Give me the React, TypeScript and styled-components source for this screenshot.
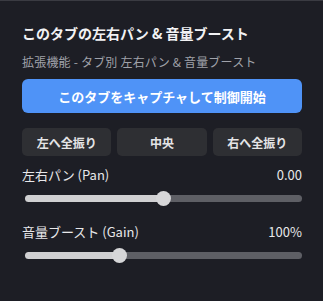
import { useState } from "react";
import styled, { createGlobalStyle } from "styled-components";

const GlobalStyle = createGlobalStyle`
  html, body {
    margin: 0;
    padding: 0;
    background: #1d1e25;
  }
  body {
    font-family: "Noto Sans CJK JP", "Noto Sans", sans-serif;
  }
`;

const Panel = styled.div`
  box-sizing: border-box;
  width: 323px;
  height: 301px;
  border-top: 1px solid #3a3b42;
  padding: 22px 21px 0 22px;
  color: #e6e6e8;
  background: #1d1e25;
`;

const Title = styled.h1`
  margin: 0;
  font-size: 14px;
  line-height: 20px;
  font-weight: 700;
  color: #f2f2f4;
`;

const Subtitle = styled.p`
  margin: 10px 0 0;
  font-size: 12px;
  line-height: 17px;
  letter-spacing: 0.2px;
  color: #a0a2aa;
`;

const PrimaryButton = styled.button`
  display: block;
  width: 100%;
  height: 34px;
  margin-top: 9px;
  border: none;
  border-radius: 6px;
  background: #4f93f7;
  color: #ffffff;
  font-family: inherit;
  font-size: 13px;
  font-weight: 700;
  cursor: pointer;
`;

const PresetRow = styled.div`
  display: grid;
  grid-template-columns: repeat(3, 1fr);
  gap: 6px;
  margin-top: 15px;
`;

const PresetButton = styled.button`
  height: 28px;
  border: none;
  border-radius: 5px;
  background: #2e2f33;
  color: #e4e4e6;
  font-family: inherit;
  font-size: 12px;
  font-weight: 700;
  cursor: pointer;
`;

const Control = styled.div<{ $gap: number }>`
  margin-top: ${(p) => p.$gap}px;
`;

const LabelRow = styled.div`
  display: flex;
  justify-content: space-between;
  align-items: baseline;
  font-size: 13px;
  line-height: 18px;
  color: #e8e8ea;
`;

const Range = styled.input`
  -webkit-appearance: none;
  appearance: none;
  display: block;
  width: calc(100% - 3px);
  height: 7px;
  margin: 11px 0 0 3px;
  border-radius: 4px;
  outline: none;

  &::-webkit-slider-thumb {
    -webkit-appearance: none;
    appearance: none;
    width: 15px;
    height: 15px;
    border-radius: 50%;
    background: #d6d6d8;
    border: none;
    cursor: pointer;
  }
`;

const fill = (value: number, min: number, max: number) => {
  const pct = ((value - min) / (max - min)) * 100;
  return `linear-gradient(to right, #d0d0d2 0%, #d0d0d2 ${pct}%, #5e5f65 ${pct}%, #5e5f65 100%)`;
};

const App = () => {
  const [pan, setPan] = useState(0);
  const [gain, setGain] = useState(100);

  return (
    <>
      <GlobalStyle />
      <Panel>
        <Title>このタブの左右パン &amp; 音量ブースト</Title>
        <Subtitle>拡張機能 - タブ別 左右パン &amp; 音量ブースト</Subtitle>
        <PrimaryButton>このタブをキャプチャして制御開始</PrimaryButton>

        <PresetRow>
          <PresetButton onClick={() => setPan(-1)}>左へ全振り</PresetButton>
          <PresetButton onClick={() => setPan(0)}>中央</PresetButton>
          <PresetButton onClick={() => setPan(1)}>右へ全振り</PresetButton>
        </PresetRow>

        <Control $gap={10}>
          <LabelRow>
            <span>左右パン (Pan)</span>
            <span>{pan.toFixed(2)}</span>
          </LabelRow>
          <Range
            type="range"
            min={-1}
            max={1}
            step={0.01}
            value={pan}
            onChange={(e) => setPan(Number(e.target.value))}
            style={{ background: fill(pan, -1, 1) }}
          />
        </Control>

        <Control $gap={21}>
          <LabelRow>
            <span>音量ブースト (Gain)</span>
            <span>{gain}%</span>
          </LabelRow>
          <Range
            type="range"
            min={0}
            max={300}
            step={1}
            value={gain}
            onChange={(e) => setGain(Number(e.target.value))}
            style={{ background: fill(gain, 0, 300) }}
          />
        </Control>
      </Panel>
    </>
  );
};

export default App;
